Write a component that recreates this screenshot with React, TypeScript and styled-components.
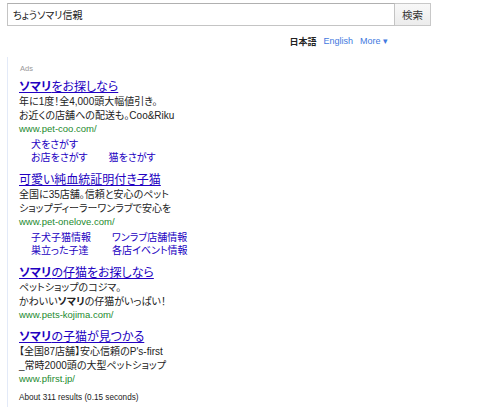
import styled, { createGlobalStyle } from "styled-components";

const GlobalStyle = createGlobalStyle`
    html, body {
        margin: 0;
        padding: 0;
        background: #fff;
    }
    body {
        font-family: "Liberation Sans", "Noto Sans CJK JP", sans-serif;
        font-feature-settings: "palt";
    }
`;

const Page = styled.div`
    padding: 3px 0 0 7px;
    width: 424px;
`;

const SearchBar = styled.form`
    display: flex;
    height: 23px;
`;

const SearchInput = styled.input`
    flex: 1;
    box-sizing: border-box;
    height: 23px;
    border: 1px solid #c4c4c4;
    border-top-color: #b0b0b0;
    padding: 0 5px;
    font-family: "Liberation Sans", "Noto Sans CJK JP", sans-serif;
    font-feature-settings: "palt";
    font-size: 10px;
    color: #222;
    outline: none;
`;

const SearchButton = styled.button`
    box-sizing: border-box;
    width: 36px;
    height: 23px;
    border: 1px solid #c8c8c8;
    border-left: none;
    background: linear-gradient(#f8f8f8, #ececec);
    font-family: "Noto Sans CJK JP", sans-serif;
    font-size: 10.5px;
    color: #333;
    padding: 0;
`;

const LangRow = styled.div`
    display: flex;
    justify-content: flex-end;
    align-items: center;
    gap: 7px;
    padding-right: 43px;
    margin-top: 9px;
    height: 12px;
    font-size: 9px;
`;

const LangCurrent = styled.span`
    font-weight: bold;
    color: #222;
`;

const LangLink = styled.a`
    color: #4279e0;
    text-decoration: none;
`;

const Results = styled.div`
    margin-top: 10px;
    border-left: 1px solid #e3eaf8;
    padding: 7px 0 8px 11px;
`;

const AdsLabel = styled.div`
    font-size: 7.5px;
    color: #999;
    margin-left: 1px;
    line-height: 10px;
`;

const AdList = styled.div`
    margin-top: 5px;
`;

const Ad = styled.div`
    margin-bottom: 8px;
`;

const AdTitle = styled.a`
    display: block;
    font-size: 12px;
    line-height: 16px;
    color: #2200c1;
    text-decoration: underline;
    text-underline-offset: 1px;
    b {
        font-weight: bold;
    }
`;

const AdText = styled.div`
    font-size: 10px;
    line-height: 13.5px;
    color: #222;
    b {
        font-weight: bold;
    }
`;

const AdUrl = styled.div`
    font-size: 9.5px;
    line-height: 13px;
    color: #1d8a2e;
`;

const SiteLinks = styled.div`
    display: grid;
    grid-template-columns: auto auto;
    justify-content: start;
    column-gap: 21px;
    margin: 4px 0 0 12px;
`;

const SiteLink = styled.a<{ $col?: number }>`
    grid-column: ${(p) => p.$col ?? "auto"};
    font-size: 10px;
    line-height: 12.5px;
    color: #2200c1;
    text-decoration: none;
`;

const Stats = styled.div`
    font-size: 8.2px;
    color: #222;
    margin-top: 6px;
`;

function App() {
    return (
        <>
            <GlobalStyle />
            <Page>
                <SearchBar>
                    <SearchInput defaultValue="ちょうソマリ信親" />
                    <SearchButton type="button">検索</SearchButton>
                </SearchBar>
                <LangRow>
                    <LangCurrent>日本語</LangCurrent>
                    <LangLink>English</LangLink>
                    <LangLink>More ▾</LangLink>
                </LangRow>
                <Results>
                    <AdsLabel>Ads</AdsLabel>
                    <AdList>
                        <Ad>
                            <AdTitle><b>ソマリ</b>をお探しなら</AdTitle>
                            <AdText>年に1度！全4,000頭大幅値引き。</AdText>
                            <AdText>お近くの店舗への配送も。Coo&amp;Riku</AdText>
                            <AdUrl>www.pet-coo.com/</AdUrl>
                            <SiteLinks>
                                <SiteLink $col={1}>犬をさがす</SiteLink>
                                <SiteLink $col={1}>お店をさがす</SiteLink>
                                <SiteLink $col={2}>猫をさがす</SiteLink>
                            </SiteLinks>
                        </Ad>
                        <Ad>
                            <AdTitle>可愛い純血統証明付き子猫</AdTitle>
                            <AdText>全国に35店舗。信頼と安心のペット</AdText>
                            <AdText>ショップディーラーワンラブで安心を</AdText>
                            <AdUrl>www.pet-onelove.com/</AdUrl>
                            <SiteLinks>
                                <SiteLink>子犬子猫情報</SiteLink>
                                <SiteLink>ワンラブ店舗情報</SiteLink>
                                <SiteLink>巣立った子達</SiteLink>
                                <SiteLink>各店イベント情報</SiteLink>
                            </SiteLinks>
                        </Ad>
                        <Ad>
                            <AdTitle><b>ソマリ</b>の仔猫をお探しなら</AdTitle>
                            <AdText>ペットショップのコジマ。</AdText>
                            <AdText>かわいい<b>ソマリ</b>の仔猫がいっぱい！</AdText>
                            <AdUrl>www.pets-kojima.com/</AdUrl>
                        </Ad>
                        <Ad>
                            <AdTitle><b>ソマリ</b>の子猫が見つかる</AdTitle>
                            <AdText>【全国87店舗】安心信頼のP's-first</AdText>
                            <AdText>_常時2000頭の大型ペットショップ</AdText>
                            <AdUrl>www.pfirst.jp/</AdUrl>
                        </Ad>
                    </AdList>
                    <Stats>About 311 results (0.15 seconds)</Stats>
                </Results>
            </Page>
        </>
    );
}

export default App;
